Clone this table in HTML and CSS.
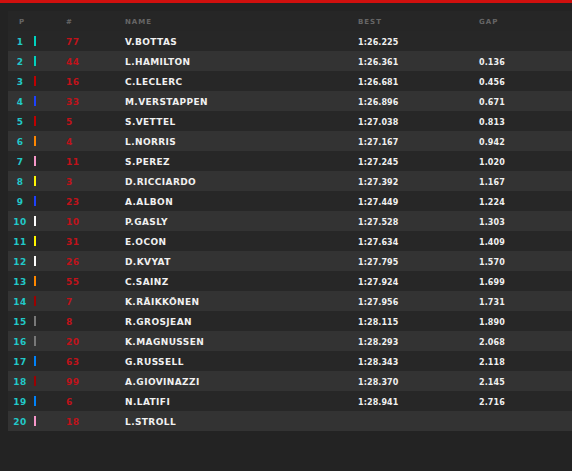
FILE: index.html
```html
<!DOCTYPE html>
<html>
<head>
<meta charset="utf-8">
<link rel="stylesheet" href="styles.css">
</head>
<body>
<div class="topbar"></div>
<div class="table">
  <div class="row head">
    <div class="pos hp">P</div><div class="bar-cell"></div><div class="num hn">#</div><div class="name hn">NAME</div><div class="best hn">BEST</div><div class="gap hn">GAP</div>
  </div>
  <div class="row"><div class="pos">1</div><div class="bar-cell"><span class="bar mer"></span></div><div class="num">77</div><div class="name">V.BOTTAS</div><div class="best">1:26.225</div><div class="gap"></div></div>
  <div class="row"><div class="pos">2</div><div class="bar-cell"><span class="bar mer"></span></div><div class="num">44</div><div class="name">L.HAMILTON</div><div class="best">1:26.361</div><div class="gap">0.136</div></div>
  <div class="row"><div class="pos">3</div><div class="bar-cell"><span class="bar fer"></span></div><div class="num">16</div><div class="name">C.LECLERC</div><div class="best">1:26.681</div><div class="gap">0.456</div></div>
  <div class="row"><div class="pos">4</div><div class="bar-cell"><span class="bar rbr"></span></div><div class="num">33</div><div class="name">M.VERSTAPPEN</div><div class="best">1:26.896</div><div class="gap">0.671</div></div>
  <div class="row"><div class="pos">5</div><div class="bar-cell"><span class="bar fer"></span></div><div class="num">5</div><div class="name">S.VETTEL</div><div class="best">1:27.038</div><div class="gap">0.813</div></div>
  <div class="row"><div class="pos">6</div><div class="bar-cell"><span class="bar mcl"></span></div><div class="num">4</div><div class="name">L.NORRIS</div><div class="best">1:27.167</div><div class="gap">0.942</div></div>
  <div class="row"><div class="pos">7</div><div class="bar-cell"><span class="bar rp"></span></div><div class="num">11</div><div class="name">S.PEREZ</div><div class="best">1:27.245</div><div class="gap">1.020</div></div>
  <div class="row"><div class="pos">8</div><div class="bar-cell"><span class="bar ren"></span></div><div class="num">3</div><div class="name">D.RICCIARDO</div><div class="best">1:27.392</div><div class="gap">1.167</div></div>
  <div class="row"><div class="pos">9</div><div class="bar-cell"><span class="bar rbr"></span></div><div class="num">23</div><div class="name">A.ALBON</div><div class="best">1:27.449</div><div class="gap">1.224</div></div>
  <div class="row"><div class="pos">10</div><div class="bar-cell"><span class="bar at"></span></div><div class="num">10</div><div class="name">P.GASLY</div><div class="best">1:27.528</div><div class="gap">1.303</div></div>
  <div class="row"><div class="pos">11</div><div class="bar-cell"><span class="bar ren"></span></div><div class="num">31</div><div class="name">E.OCON</div><div class="best">1:27.634</div><div class="gap">1.409</div></div>
  <div class="row"><div class="pos">12</div><div class="bar-cell"><span class="bar at"></span></div><div class="num">26</div><div class="name">D.KVYAT</div><div class="best">1:27.795</div><div class="gap">1.570</div></div>
  <div class="row"><div class="pos">13</div><div class="bar-cell"><span class="bar mcl"></span></div><div class="num">55</div><div class="name">C.SAINZ</div><div class="best">1:27.924</div><div class="gap">1.699</div></div>
  <div class="row"><div class="pos">14</div><div class="bar-cell"><span class="bar alf"></span></div><div class="num">7</div><div class="name">K.RÄIKKÖNEN</div><div class="best">1:27.956</div><div class="gap">1.731</div></div>
  <div class="row"><div class="pos">15</div><div class="bar-cell"><span class="bar haas"></span></div><div class="num">8</div><div class="name">R.GROSJEAN</div><div class="best">1:28.115</div><div class="gap">1.890</div></div>
  <div class="row"><div class="pos">16</div><div class="bar-cell"><span class="bar haas"></span></div><div class="num">20</div><div class="name">K.MAGNUSSEN</div><div class="best">1:28.293</div><div class="gap">2.068</div></div>
  <div class="row"><div class="pos">17</div><div class="bar-cell"><span class="bar wil"></span></div><div class="num">63</div><div class="name">G.RUSSELL</div><div class="best">1:28.343</div><div class="gap">2.118</div></div>
  <div class="row"><div class="pos">18</div><div class="bar-cell"><span class="bar alf"></span></div><div class="num">99</div><div class="name">A.GIOVINAZZI</div><div class="best">1:28.370</div><div class="gap">2.145</div></div>
  <div class="row"><div class="pos">19</div><div class="bar-cell"><span class="bar wil"></span></div><div class="num">6</div><div class="name">N.LATIFI</div><div class="best">1:28.941</div><div class="gap">2.716</div></div>
  <div class="row"><div class="pos">20</div><div class="bar-cell"><span class="bar rp"></span></div><div class="num">18</div><div class="name">L.STROLL</div><div class="best"></div><div class="gap"></div></div>
</div>
</body>
</html>
```
FILE: styles.css
```css
html, body {
  margin: 0;
  padding: 0;
  background: #232323;
  height: 100%;
}
body {
  font-family: "DejaVu Sans", Verdana, sans-serif;
  font-weight: bold;
  color: #f0f0f0;
}
.topbar {
  height: 3px;
  background: #d0100e;
}
.table {
  padding: 8px 0 0 8px;
}
.row {
  display: grid;
  grid-template-columns: 24px 34px 59px 233px 121px 1fr;
  height: 20px;
  box-sizing: border-box;
  padding-top: 2px;
  align-items: center;
  font-size: 9px;
  letter-spacing: 0.4px;
}
.row:nth-child(odd) {
  background: #333333;
}
.row:nth-child(even) {
  background: #272727;
}
.row.head {
  background: #262626;
}
.pos {
  text-align: center;
  color: #22c8c8;
}
.num {
  color: #c0121a;
}
.best, .gap {
  font-size: 8px;
  letter-spacing: 0.1px;
}
.head > div {
  font-size: 7px;
  font-weight: bold;
  color: #666666;
  letter-spacing: 1px;
}
.head .hp {
  padding-left: 4px;
}
.bar-cell {
  display: flex;
  align-items: center;
  margin-top: -2px;
}
.bar {
  display: block;
  width: 2px;
  height: 10px;
  margin-left: 2px;
}
.mer { background: #00d2be; }
.fer { background: #c00000; }
.rbr { background: #1e41ff; }
.mcl { background: #ff8700; }
.rp { background: #f596c8; }
.ren { background: #fff500; }
.at { background: #ffffff; }
.alf { background: #9b0000; }
.haas { background: #787878; }
.wil { background: #0082fa; }
```
